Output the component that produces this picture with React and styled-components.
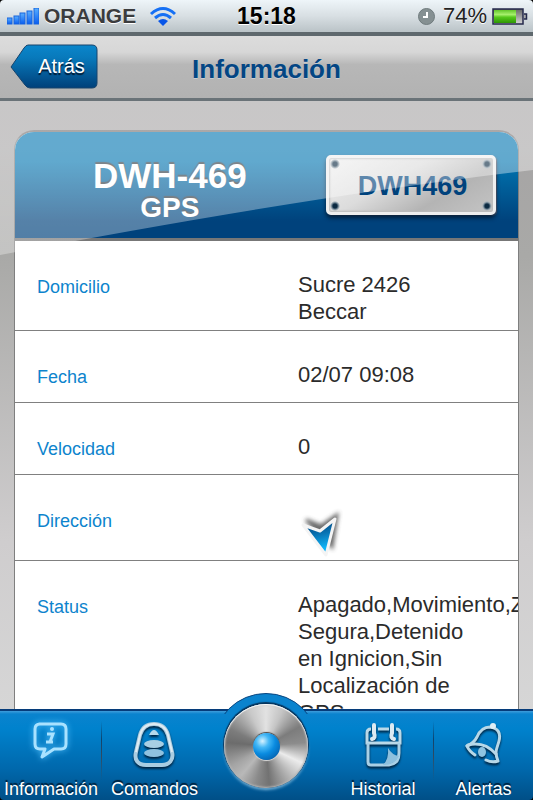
import React from 'react';
import styled, { createGlobalStyle } from 'styled-components';

const GlobalStyle = createGlobalStyle`
  *, *::before, *::after { box-sizing: border-box; }
  body {
    margin: 0;
    background: #000;
    font-family: "Liberation Sans", Arial, Helvetica, sans-serif;
  }
  button { font-family: inherit; border: 0; margin: 0; cursor: pointer; }
`;

const Screen = styled.div`
  display: flex;
  flex-direction: column;
  height: 100vh;
  overflow: hidden;
  border-radius: 4px;
`;

const StatusBar = styled.header`
  display: grid;
  grid-template-columns: 1fr auto 1fr;
  align-items: center;
  flex: none;
  height: 36px;
  padding: 0 5px 0 7px;
  border-bottom: 4px solid #5e686d;
  background: linear-gradient(#eef5f9, #d8dfe3 50%, #bac3c7);
  color: #000;
  text-shadow: 0 1px 0 #fff;
`;

const StatusGroup = styled.div`
  display: flex;
  align-items: center;
  justify-content: ${(p) => (p.$end ? 'flex-end' : 'flex-start')};
  gap: ${(p) => p.$gap}px;
`;

const Carrier = styled.span`
  font-size: 21px;
  font-weight: 700;
  color: #3b3c3e;
  padding-right: 8px;
`;

const Clock = styled.time`
  font-size: 23px;
  font-weight: 700;
  padding-right: 2px;
`;

const Percent = styled.span`
  font-size: 22px;
  color: #222;
  padding: 0 1px 0 4px;
`;

const NavBar = styled.nav`
  display: grid;
  grid-template-columns: 1fr auto 1fr;
  align-items: center;
  flex: none;
  height: 65px;
  padding: 0 10px;
  border-bottom: 3px solid #6a7378;
  background: linear-gradient(#dcdcdc, #d7d7d7 26%, #b7b7b7 46%, #b2b2b2);
`;

const BackButton = styled.button`
  position: relative;
  isolation: isolate;
  justify-self: start;
  width: 88px;
  height: 46px;
  padding: 0 0 2px 15px;
  background: none;
  color: #fff;
  font-size: 20px;
  text-shadow: 0 2px 1px #00172f;
`;

const BackShape = styled.svg`
  position: absolute;
  inset: 0;
  z-index: -1;
  width: 100%;
  height: 100%;
`;

const Title = styled.h1`
  margin: 0;
  padding-top: 4px;
  font-size: 26px;
  line-height: 30px;
  color: #034684;
  text-shadow: 0 1px 0 #c8cdd2;
`;

const Content = styled.main`
  position: relative;
  flex: 1;
  min-height: 0;
  overflow: hidden;
  padding: 29px 14px 0;
  background: linear-gradient(#a5a3a4, #a9a9a7 155px, #cfcdce 440px, #d6d6d6);
`;

const Glare = styled.svg`
  position: absolute;
  top: 0;
  left: 0;
  width: 100%;
  height: 155px;
  pointer-events: none;
`;

const Card = styled.section`
  overflow: hidden;
  border: 1px solid #7f7f7f;
  border-top: 2px solid #757070;
  border-radius: 20px 20px 0 0;
  background: #fff;
`;

const CardHeader = styled.div`
  display: flex;
  align-items: center;
  justify-content: space-between;
  height: 109px;
  padding: 0 22px 0 78px;
  border-bottom: 3px solid #777;
  background: linear-gradient(#0074b0, #0074b0 28%, #00427c 84%);
`;

const Heading = styled.div`
  padding-top: 10px;
  text-align: center;
  font-weight: 700;
  color: #fff;
  text-shadow: 0 -2px 1px #303a42;
`;

const DeviceName = styled.h2`
  margin: 0;
  font-size: 35px;
  line-height: 36px;
`;

const DeviceKind = styled.p`
  margin: 0;
  font-size: 28px;
  line-height: 28px;
`;

const dot = (x, y) =>
  `radial-gradient(circle at ${x} ${y}, #0b2a42 2px, #9fadb6 4px, transparent 5px)`;

const Plate = styled.div`
  display: flex;
  align-items: center;
  justify-content: center;
  width: 170px;
  height: 60px;
  border: 3px solid #eee;
  border-radius: 5px;
  background:
    ${dot('6px', '6px')},
    ${dot('calc(100% - 6px)', '6px')},
    ${dot('6px', 'calc(100% - 6px)')},
    ${dot('calc(100% - 6px)', 'calc(100% - 6px)')},
    linear-gradient(150deg, #f0f0f0, #dcdcdc 40%, #b4b4b4 70%, #c4c4c4);
  box-shadow: inset 0 0 2px 1px #bbb, 0 3px 4px #001c38, 1px 1px 1px #667;
  color: #00427c;
  font-size: 27px;
  font-weight: 700;
  padding: 2px 0 0 3px;
`;

const Details = styled.dl`
  margin: 0;
`;

const Row = styled.div`
  display: grid;
  grid-template-columns: 261fr 180fr 40fr;
  min-height: ${(p) => (p.$tall ? 86 : 72)}px;
  padding: 30px 0 5px 22px;
  border-bottom: 1px solid #808080;
`;

const Label = styled.dt`
  padding-top: 6px;
  font-size: 18px;
  line-height: 20px;
  color: #0d84cd;
`;

const Value = styled.dd`
  margin: 0;
  min-width: 0;
  font-size: 22px;
  line-height: 27px;
  color: #2b2b2b;
`;

const Arrow = styled.svg`
  display: block;
  width: 48px;
  height: 50px;
  overflow: visible;
`;

const TabBar = styled.nav`
  position: relative;
  display: grid;
  grid-template-columns: 102fr 105fr 118fr 109fr 99fr;
  flex: none;
  height: 91px;
  border-top: 2px solid #063c7a;
  background: linear-gradient(#3f9ddb, #0a83ce 3px, #0082cd 20%, #0068ac 65%, #004f87);
`;

const Tab = styled.button`
  display: flex;
  flex-direction: column;
  align-items: center;
  justify-content: space-between;
  min-width: 0;
  padding: 8px 0 1px ${(p) => p.$inset || 0}px;
  background:
    linear-gradient(transparent, #0d446f 30%, #324a60 60%, transparent)
    right 10px / 1px 60px no-repeat;
  ${(p) => p.$plain && 'background: none;'}
  color: #fff;
  font-size: 18px;
  line-height: 20px;
  white-space: nowrap;
  text-shadow: 0 -2px 1px #00182e;
`;

const TabIcon = styled.svg`
  width: 52px;
  height: 52px;
  overflow: visible;
  filter: ${(p) =>
    p.$active ? 'drop-shadow(0 0 3px #59c4ff)' : 'drop-shadow(0 2px 1px #00233f)'};
`;

const HomeSlot = styled.div`
  position: relative;
  display: flex;
  justify-content: center;
`;

const Hump = styled.span`
  position: absolute;
  top: -18px;
  left: 50%;
  width: 106px;
  height: 21px;
  margin-left: -53px;
  overflow: hidden;
  &::before {
    content: '';
    display: block;
    height: 106px;
    border: 1px solid #0a4680;
    border-radius: 50%;
    background: #0a83ce;
  }
`;

const HomeButton = styled.button`
  position: absolute;
  top: -7px;
  display: grid;
  place-items: center;
  width: 84px;
  height: 84px;
  padding: 0;
  border-radius: 50%;
  background: conic-gradient(
    #e2e2e2, #c4c4c4 25deg, #7c7c7c 60deg, #8c8c8c 85deg, #ececec 115deg,
    #c4c4c4 135deg, #727272 175deg, #8a8a8a 195deg, #b8b8b8 220deg,
    #a4a4a4 240deg, #6c6c6c 275deg, #7c7c7c 295deg, #c8c8c8 335deg, #e2e2e2
  );
  box-shadow: inset 0 1px 1px #fff, inset 0 0 2px 1px #b4b4b4,
    0 -1px 1px 1px #06345c, 0 2px 3px #7ab5d9;
  &::before {
    content: '';
    width: 27px;
    height: 27px;
    border-radius: 50%;
    background: radial-gradient(circle at 35% 30%, #d8f3ff, #45b8f6 25%, #0a8be0 50%, #004a94);
    box-shadow: 0 1px 1px #ddd, 0 -1px 1px #444;
  }
`;

const ROWS = [
  { label: 'Domicilio', value: <>Sucre 2426<br />Beccar</> },
  { label: 'Fecha', value: '02/07 09:08' },
  { label: 'Velocidad', value: '0' },
  { label: 'Dirección', value: <DirectionArrow />, tall: true },
  {
    label: 'Status',
    value: 'Apagado,Movimiento,Zona Segura,Detenido en Ignicion,Sin Localización de GPS',
  },
];

function DirectionArrow() {
  return (
    <Arrow viewBox="0 0 48 50" role="img" aria-label="Sur">
      <defs>
        <linearGradient id="arrow" x1="0" y1="0" x2="0.2" y2="1">
          <stop offset="0.1" stopColor="#003b72" />
          <stop offset="0.5" stopColor="#0873b3" />
          <stop offset="0.9" stopColor="#10b4f7" />
        </linearGradient>
        <filter id="soft" x="-30%" y="-30%" width="160%" height="160%">
          <feGaussianBlur stdDeviation="2" />
        </filter>
      </defs>
      <path d="M8 15 L23 21 L39 10 L34 42 Z" fill="#444" stroke="#444" strokeWidth="3" opacity="0.8" filter="url(#soft)" />
      <path d="M5 20 L22 26 L37 14 L28 50 Z" fill="url(#arrow)" stroke="#f4f4f4" strokeWidth="3" strokeLinejoin="round" />
    </Arrow>
  );
}

function SignalIcon() {
  return (
    <svg width="32" height="17" viewBox="0 0 32 17" aria-hidden="true">
      <defs>
        <linearGradient id="blue" x1="0" y1="0" x2="0" y2="1">
          <stop offset="0" stopColor="#5ab0ff" />
          <stop offset="1" stopColor="#0a5df0" />
        </linearGradient>
      </defs>
      {[6, 8, 11, 13, 16].map((h, i) => (
        <rect key={h} x={i * 7 - (i > 1 ? 1 : 0)} y={16 - h} width="5" height={h} fill="url(#blue)" stroke="#1764de" strokeWidth="1" />
      ))}
    </svg>
  );
}

function WifiIcon() {
  return (
    <svg width="28" height="20" viewBox="0 0 28 20" fill="none" stroke="#1670f4" strokeWidth="3" aria-hidden="true">
      <path d="M2 8 Q14 -3 26 8" />
      <path d="M6 12 Q14 5 22 12" />
      <path d="M9 15 Q14 11 19 15 L14 20 Z" fill="#0755e8" stroke="none" />
    </svg>
  );
}

function AlarmIcon() {
  return (
    <svg width="17" height="17" viewBox="0 0 17 17" aria-hidden="true">
      <circle cx="8.500" cy="8.500" r="8" fill="#859092" stroke="#6f7b7d" />
      <path d="M9 4 V9 H5" fill="none" stroke="#fff" strokeWidth="2" />
    </svg>
  );
}

function BatteryIcon() {
  return (
    <svg width="36" height="17" viewBox="0 0 36 17" aria-hidden="true">
      <defs>
        <linearGradient id="charge" x1="0" y1="0" x2="0" y2="1">
          <stop offset="0" stopColor="#62c62a" />
          <stop offset="0.35" stopColor="#a6f06c" />
          <stop offset="0.55" stopColor="#56c91c" />
          <stop offset="1" stopColor="#2d9603" />
        </linearGradient>
        <linearGradient id="empty" x1="0" y1="0" x2="0" y2="1">
          <stop offset="0" stopColor="#666" />
          <stop offset="1" stopColor="#d8d8d8" />
        </linearGradient>
      </defs>
      <rect x="1" y="1" width="30" height="15" fill="url(#empty)" stroke="#24294b" strokeWidth="1.500" />
      <rect x="2" y="2" width="22" height="13" fill="url(#charge)" />
      <path d="M32 6 H34.500 V11 H32" fill="#aaa" stroke="#24294b" strokeWidth="1.500" />
    </svg>
  );
}

function InfoIcon() {
  return (
    <TabIcon $active viewBox="0 0 52 52" aria-hidden="true">
      <path d="M14 5 H36 Q41 5 41 10 V25 Q41 30 36 30 H29 L17 38 L20 30 H15 Q10 30 10 25 V10 Q10 5 15 5 Z" fill="none" stroke="#a9e2ff" strokeWidth="3" strokeLinejoin="round" />
      <circle cx="27" cy="10" r="2" fill="#a9e2ff" />
      <path d="M22 15 H28 L25 23 H28 M21 23 H26" fill="none" stroke="#a9e2ff" strokeWidth="3" />
    </TabIcon>
  );
}

function RemoteIcon() {
  return (
    <TabIcon viewBox="0 0 52 52" aria-hidden="true">
      <path d="M25 5 C33 5 37 9 39 16 L43 33 C45 41 40 46 33 46 H17 C9 46 5 41 7 33 L11 16 C13 9 17 5 25 5 Z" fill="none" stroke="#a9cde2" strokeWidth="4" />
      <path d="M25 5 C33 5 37 9 39 16 L43 33 M7 33 L11 16 C13 9 17 5 25 5" fill="none" stroke="#dfebf2" strokeWidth="2" />
      <path d="M20 16 Q25 6 30 16 Z" fill="#b5d9eb" />
      <ellipse cx="25" cy="25" rx="10" ry="4" fill="#a8cfe4" />
      <ellipse cx="25" cy="34" rx="10" ry="4" fill="#8fc2e0" />
    </TabIcon>
  );
}

function CalendarIcon() {
  return (
    <TabIcon viewBox="0 0 52 52" fill="none" stroke="#a9d0e6" strokeWidth="3" aria-hidden="true">
      <path d="M14 10 Q10 10 10 14 V24 H43 V14 Q43 10 39 10 M21 10 H32" stroke="#b9d9e9" />
      <path d="M11 24 V43 Q11 46 14 46 H32 Q42 45 42 34 V24" strokeLinejoin="round" />
      <path d="M31 29 Q35 36 42 37 Q38 46 26 46 Q32 40 31 29 Z" fill="#8dc0de" stroke="none" />
      <path d="M15 20 Q19 19 17 14 V6 M37 20 Q33 19 35 14 V6" stroke="#dceaf2" strokeWidth="4" strokeLinecap="round" />
    </TabIcon>
  );
}

function BellIcon() {
  return (
    <TabIcon viewBox="0 0 52 52" fill="none" stroke="#b7d8e8" strokeWidth="3" strokeLinecap="round" strokeLinejoin="round" aria-hidden="true">
      <path d="M9 27 Q16 24 19 18 C22 11 27 8 32 8 C40 9 43 14 41 22 C39 30 36 32 40 42 Q34 44 28 41" />
      <path d="M9 27 Q11 32 17 36" />
      <path d="M10 26 Q26 22 38 35" />
      <ellipse cx="24" cy="33" rx="4" ry="5" fill="#8fc4e1" stroke="none" />
      <circle cx="35" cy="7" r="3" fill="#e0eef5" stroke="none" />
    </TabIcon>
  );
}

export default function App() {
  return (
    <>
      <GlobalStyle />
      <Screen>
        <StatusBar>
          <StatusGroup $gap={5}>
            <SignalIcon />
            <Carrier>ORANGE</Carrier>
            <WifiIcon />
          </StatusGroup>
          <Clock>15:18</Clock>
          <StatusGroup $end $gap={4}>
            <AlarmIcon />
            <Percent>74%</Percent>
            <BatteryIcon />
          </StatusGroup>
        </StatusBar>

        <NavBar>
          <BackButton type="button">
            <BackShape viewBox="0 0 88 46" preserveAspectRatio="none" aria-hidden="true">
              <defs>
                <linearGradient id="back" x1="0" y1="0" x2="0" y2="1">
                  <stop offset="0" stopColor="#0a86cb" />
                  <stop offset="0.3" stopColor="#0879bb" />
                  <stop offset="1" stopColor="#00407a" />
                </linearGradient>
              </defs>
              <path d="M18 1 H82 Q87 1 87 6 V39 Q87 44 82 44 H20 Q17 44 15 41 L1 23 L14 4 Q16 1 18 1 Z" fill="url(#back)" stroke="#18446c" strokeWidth="1" />
            </BackShape>
            Atrás
          </BackButton>
          <Title>Información</Title>
        </NavBar>

        <Content>
          <Card>
            <CardHeader>
              <Heading>
                <DeviceName>DWH-469</DeviceName>
                <DeviceKind>GPS</DeviceKind>
              </Heading>
              <Plate>DWH469</Plate>
            </CardHeader>
            <Details>
              {ROWS.map((row) => (
                <Row key={row.label} $tall={row.tall}>
                  <Label>{row.label}</Label>
                  <Value>{row.value}</Value>
                </Row>
              ))}
            </Details>
          </Card>
          <Glare viewBox="0 0 533 155" preserveAspectRatio="none" aria-hidden="true">
            <defs>
              <linearGradient id="glare" x1="0" y1="0" x2="0" y2="1">
                <stop offset="0.3" stopColor="#fff" stopOpacity="0.39" />
                <stop offset="1" stopColor="#fff" stopOpacity="0.31" />
              </linearGradient>
            </defs>
            <path d="M0 0 H533 V69 Q316 94 0 154 Z" fill="url(#glare)" />
          </Glare>
        </Content>

        <TabBar>
          <Tab type="button" aria-current="page"><InfoIcon />Información</Tab>
          <Tab type="button" $plain><RemoteIcon />Comandos</Tab>
          <HomeSlot>
            <Hump />
            <HomeButton type="button" aria-label="Inicio" />
          </HomeSlot>
          <Tab type="button" $inset={7}><CalendarIcon />Historial</Tab>
          <Tab type="button" $plain><BellIcon />Alertas</Tab>
        </TabBar>
      </Screen>
    </>
  );
}
